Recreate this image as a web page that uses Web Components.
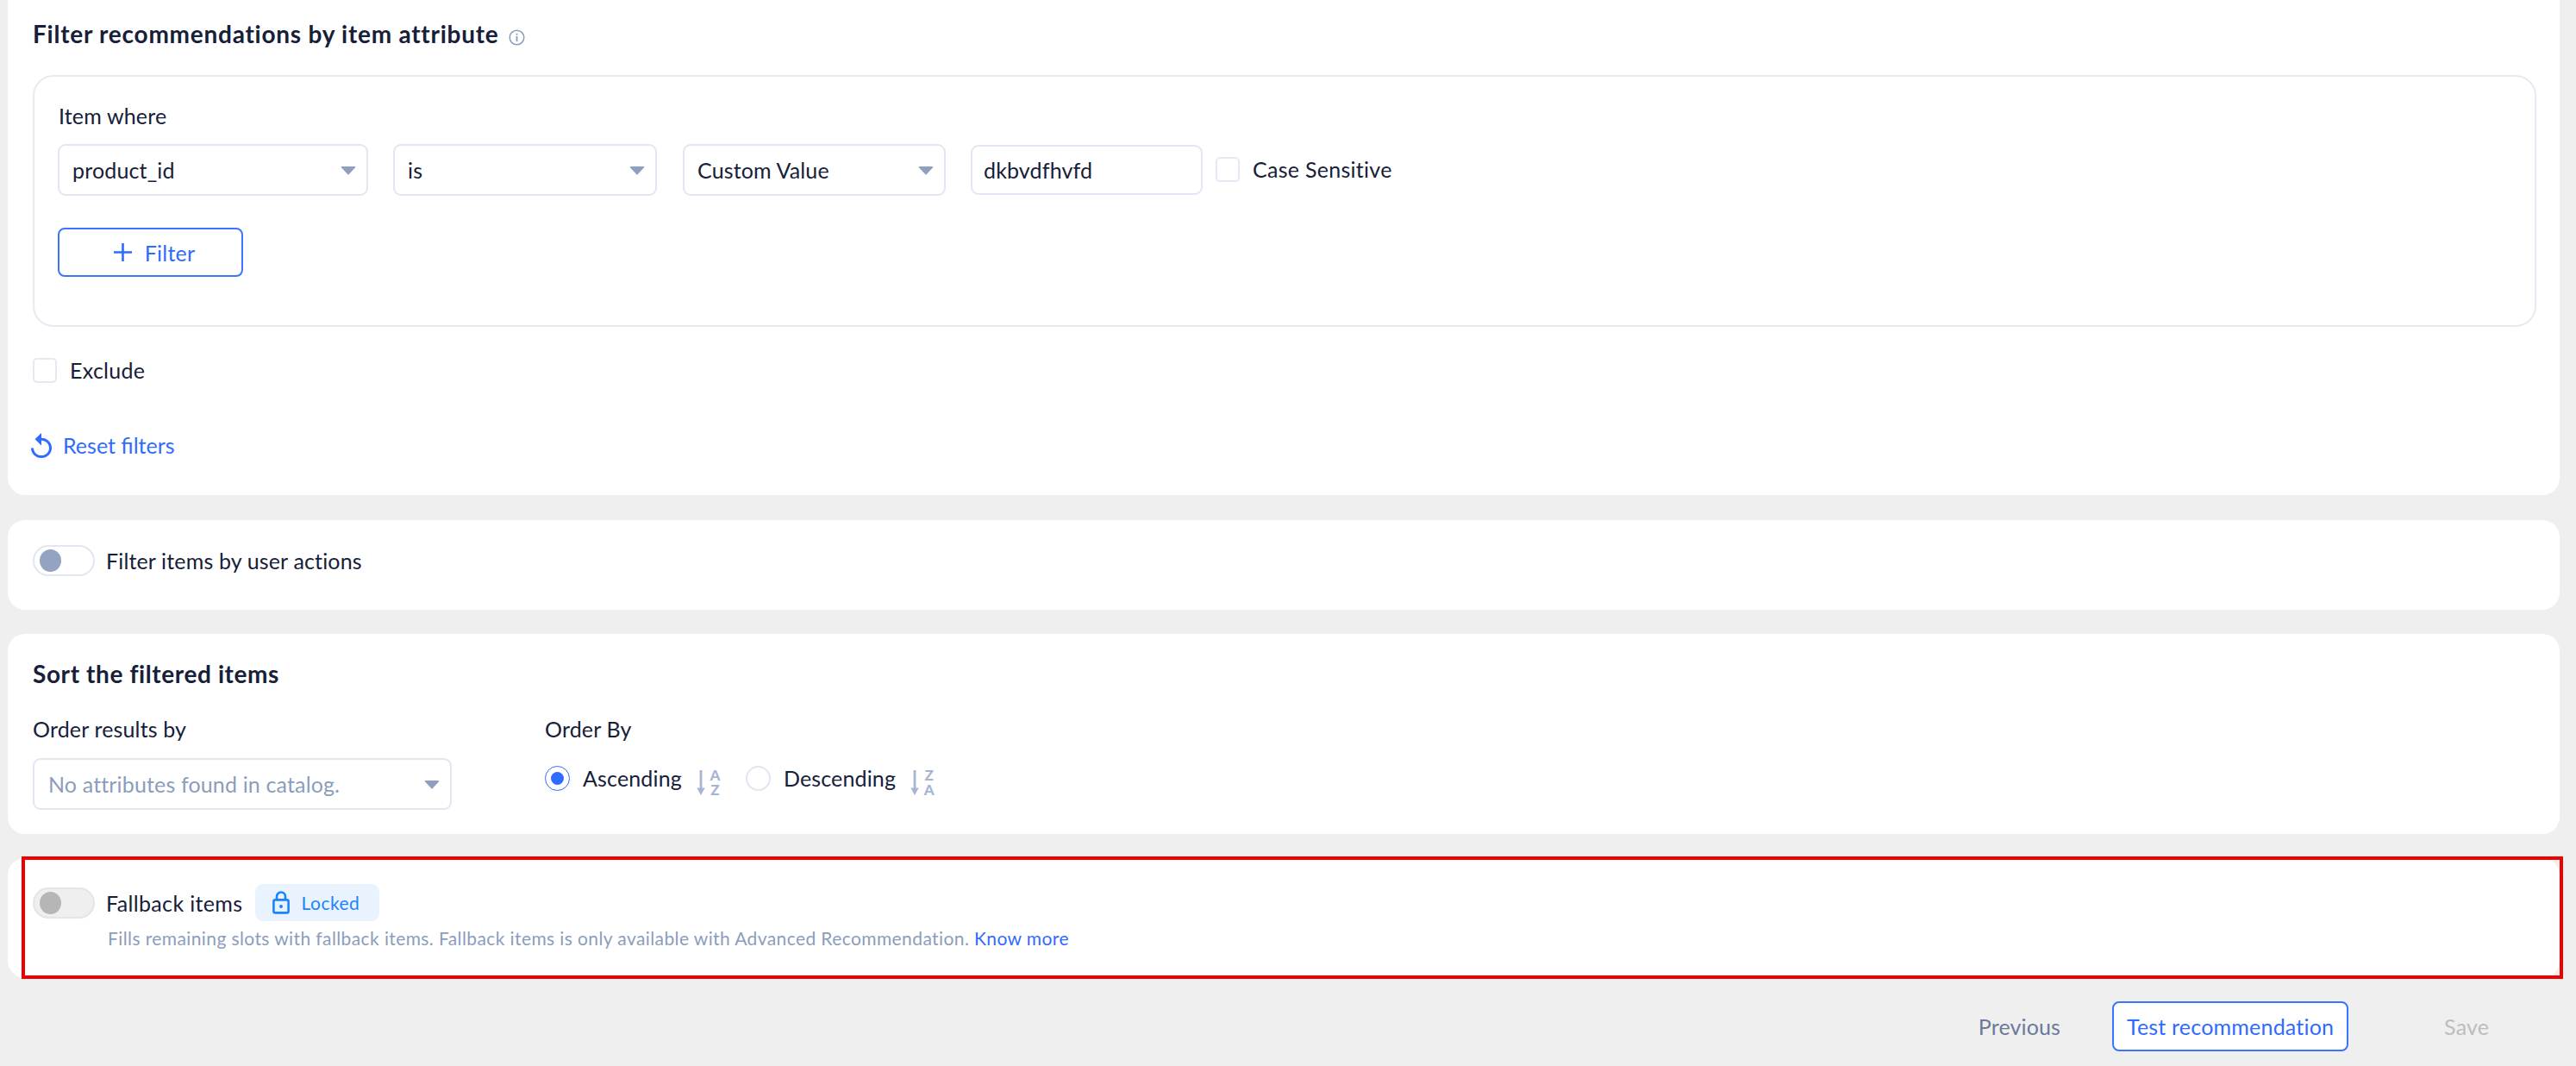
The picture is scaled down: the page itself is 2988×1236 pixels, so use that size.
<!DOCTYPE html>
<html lang="en"><head><meta charset="utf-8"><title>Recommendation filters</title>
<style>
html,body{margin:0;padding:0;background:#efefef;height:1236px;overflow:hidden}
body{font-family:Lato,"Noto Sans",sans-serif;font-size:25px;color:#162039}
</style></head>
<body>
<rec-page></rec-page>
<script>
function def(name, css, html){
  customElements.define(name, class extends HTMLElement{
    constructor(){super();const r=this.attachShadow({mode:'open'});r.innerHTML='<style>'+css+'</style>'+html;}
  });
}
const arrow='<svg width="18" height="11" viewBox="0 0 18 11"><path d="M1.5 1H16.5a.8.8 0 0 1 .6 1.3L9.6 10.3a.8.8 0 0 1-1.2 0L.9 2.3A.8.8 0 0 1 1.5 1z" fill="#8f9fbf"/></svg>';

def('ui-card',':host{display:block;background:#fff;border-radius:20px;box-sizing:border-box}','<slot></slot>');

def('ui-select',`:host{display:flex;align-items:center;justify-content:space-between;box-sizing:border-box;height:60px;border:2px solid #e3e6f2;border-radius:9px;padding:0 12px 0 15px;background:#fff;letter-spacing:.15px}
:host([placeholder]){color:#8b9dbd}
svg{flex:none}`,'<slot></slot>'+arrow);

def('ui-input',`:host{display:flex;align-items:center;box-sizing:border-box;height:58px;border:2px solid #e3e6f2;border-radius:9px;padding:0 13px;background:#fff;letter-spacing:.15px}`,'<slot></slot>');

def('ui-check',`:host{display:inline-flex;align-items:center;gap:15px;letter-spacing:.28px}
i{display:block;box-sizing:border-box;width:28px;height:29px;border:2px solid #e6e8f3;border-radius:5px;background:#fff}`,'<i></i><slot></slot>');

def('ui-toggle',`:host{display:block;box-sizing:border-box;width:72px;height:36px;border:2px solid #e3e6f2;border-radius:18px;background:#fff;padding:3px 0 0 6px}
:host([disabled]){background:#efefef;border-color:#e5e5e5}
i{display:block;width:25px;height:26px;border-radius:50%;background:#93a3c1}
:host([disabled]) i{background:#b6b6b6}`,'<i></i>');

def('ui-radio',`:host{display:inline-flex;align-items:center;gap:15px;letter-spacing:.15px}
i{display:flex;align-items:center;justify-content:center;box-sizing:border-box;width:29px;height:29px;border:2px solid #e3e6f2;border-radius:50%;background:#fff}
:host([checked]) i{border-color:#2f6bff;border-width:1.5px}
:host([checked]) i::after{content:"";width:15px;height:15px;border-radius:50%;background:#2f6bff}
::slotted([slot=icon]){margin-left:2px}`,'<i></i><slot></slot><slot name="icon"></slot>');

def('ui-button',`:host{display:flex;align-items:center;justify-content:center;box-sizing:border-box;border:2px solid #3d74ff;border-radius:8px;background:#fff;color:#2f6bff;letter-spacing:.2px}`,'<slot></slot>');

def('ui-badge',`:host{display:inline-flex;align-items:center;gap:13px;box-sizing:border-box;width:144px;height:43px;padding-left:20px;border-radius:9px;background:#e9f3fe;color:#1a84ff;font-size:21px;letter-spacing:.5px}`,
`<svg width="20" height="27" viewBox="0 0 20 27"><rect x="1.4" y="10.4" width="17.2" height="15" rx="2" fill="none" stroke="#1a84ff" stroke-width="2.6"/><path d="M5 10V6.5a5 5 0 0 1 10 0V10" fill="none" stroke="#1a84ff" stroke-width="2.6"/><circle cx="10" cy="18" r="2" fill="#1a84ff"/></svg><slot></slot>`);

function sortIcon(name,a,b){
  customElements.define(name,class extends HTMLElement{
    constructor(){super();const r=this.attachShadow({mode:'open'});
    r.innerHTML=`<style>:host{display:flex;align-items:flex-start;gap:6px;height:34px;margin-top:9px}
svg{display:block;margin-top:3px}
div{display:flex;flex-direction:column;font:900 17px/17px Lato,sans-serif;color:#a5b6d3;letter-spacing:0;text-align:center;width:11px;align-items:center}</style>
<svg width="10" height="29" viewBox="0 0 10 29"><path d="M5 0V22" stroke="#a5b6d3" stroke-width="2.8" fill="none"/><path d="M.3 20.5H9.7L5 29z" fill="#a5b6d3"/></svg><div><span>${a}</span><span>${b}</span></div>`;}
  });
}
sortIcon('sort-az','A','Z');sortIcon('sort-za','Z','A');

def('filter-card',`:host{display:block;margin-top:-20px}
ui-card{height:594px;padding:42px 27px 0 29px}
h2{margin:0;font:700 28px/34px Lato,sans-serif;letter-spacing:.75px;display:flex;align-items:center;gap:11px}
h2 svg{margin-top:8px}
.box{box-sizing:border-box;height:292px;margin-top:31px;border:2px solid #e8eaf3;border-radius:24px;padding:28px 0 0 27px;letter-spacing:.15px}
.where{line-height:34px;margin-left:1px}
.row{display:flex;align-items:flex-start;margin-top:16px}
.s1{width:360px}.s2{width:306px;margin-left:29px}.s3{width:305px;margin-left:30px}
ui-input{width:269px;margin:1px 0 0 29px}
.row ui-check{margin:14px 0 0 15px}
ui-button{width:215px;height:57px;margin-top:37px;gap:15px;padding-left:9px}
.ex{display:flex;margin-top:35px}
.reset{display:flex;align-items:center;gap:13px;margin:57px 0 0 -2px;color:#2f6bff;letter-spacing:0;line-height:30px}
svg{display:block}`,
`<ui-card>
<h2>Filter recommendations by item attribute
<svg width="19" height="19" viewBox="0 0 19 19"><circle cx="9.5" cy="9.5" r="8.3" fill="none" stroke="#8b9dbd" stroke-width="1.5"/><rect x="8.6" y="8" width="1.8" height="6" fill="#8b9dbd"/><rect x="8.6" y="4.8" width="1.8" height="1.9" fill="#8b9dbd"/></svg></h2>
<div class="box">
<div class="where">Item where</div>
<div class="row"><ui-select class="s1">product_id</ui-select><ui-select class="s2">is</ui-select><ui-select class="s3">Custom Value</ui-select><ui-input>dkbvdfhvfd</ui-input><ui-check>Case Sensitive</ui-check></div>
<ui-button><svg width="21" height="21" viewBox="0 0 21 21"><path d="M10.5 0V21M0 10.5H21" stroke="#2f6bff" stroke-width="2.6"/></svg>Filter</ui-button>
</div>
<div class="ex"><ui-check>Exclude</ui-check></div>
<div class="reset"><svg width="24" height="29" viewBox="4 1 16 20" preserveAspectRatio="none"><path fill="#2f6bff" d="M12 5V1L7 6l5 5V7c3.31 0 6 2.69 6 6s-2.69 6-6 6-6-2.69-6-6H4c0 4.42 3.58 8 8 8s8-3.58 8-8-3.58-8-8-8z"/></svg>Reset filters</div>
</ui-card>`);

def('actions-card',`:host{display:block;margin-top:29px}
ui-card{display:flex;align-items:center;gap:13px;height:104px;padding:5px 29px 15px;letter-spacing:.15px}`,
`<ui-card><ui-toggle></ui-toggle><span>Filter items by user actions</span></ui-card>`);

def('sort-card',`:host{display:block;margin-top:28px}
ui-card{height:232px;padding:29px 29px 0;letter-spacing:.15px}
h2{margin:0;font:700 28px/34px Lato,sans-serif;letter-spacing:.6px}
.cols{display:flex;margin-top:30px}
.c1{width:594px}
.lab{line-height:34px}
ui-select{width:486px;margin-top:17px;padding-left:16px}
.radios{display:flex;align-items:center;margin-top:20px;height:40px}
ui-radio+ui-radio{margin-left:30px}`,
`<ui-card><h2>Sort the filtered items</h2>
<div class="cols"><div class="c1"><div class="lab">Order results by</div><ui-select placeholder>No attributes found in catalog.</ui-select></div>
<div><div class="lab">Order By</div><div class="radios"><ui-radio checked>Ascending<sort-az slot="icon"></sort-az></ui-radio><ui-radio>Descending<sort-za slot="icon"></sort-za></ui-radio></div></div></div>
</ui-card>`);

def('fallback-card',`:host{display:block;position:relative;margin-top:28px}
ui-card{height:139px;padding:30px 29px 0}
.top{display:flex;align-items:center;gap:13px;height:43px;letter-spacing:.35px}
ui-badge{margin-left:2px}
p{margin:0 0 0 87px;padding-top:7px;font-size:21px;line-height:26px;color:#8b9dbd;letter-spacing:.4px}
a{color:#2f6bff;text-decoration:none}
.mark{position:absolute;left:16px;right:-4px;top:-2px;height:142px;border:4px solid #ee0000;box-sizing:border-box;pointer-events:none}`,
`<ui-card><div class="top"><ui-toggle disabled></ui-toggle><span>Fallback items</span><ui-badge>Locked</ui-badge></div>
<p>Fills remaining slots with fallback items. Fallback items is only available with Advanced Recommendation. <a>Know more</a></p></ui-card><div class="mark"></div>`);

def('footer-bar',`:host{display:flex;align-items:center;justify-content:flex-end;height:58px;margin-top:27px;letter-spacing:.15px}
.prev{color:#6b7a99;margin-right:60px}
ui-button{width:274px;height:58px;background:#fff}
.save{color:#bdbdbd;margin:0 82px 0 111px}`,
`<span class="prev">Previous</span><ui-button>Test recommendation</ui-button><span class="save">Save</span>`);

def('rec-page',`:host{display:block;box-sizing:border-box;width:2988px;padding:0 19px 0 9px}`,
`<filter-card></filter-card><actions-card></actions-card><sort-card></sort-card><fallback-card></fallback-card><footer-bar></footer-bar>`);
</script>
</body></html>
